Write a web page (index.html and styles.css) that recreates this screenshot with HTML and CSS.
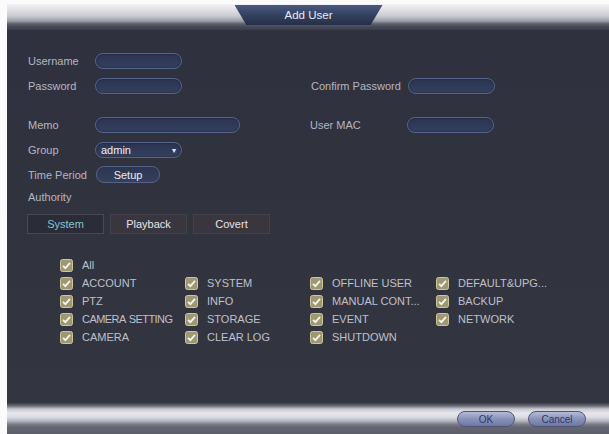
FILE: index.html
```html
<!DOCTYPE html>
<html>
<head>
<meta charset="utf-8">
<title>Add User</title>
<link rel="stylesheet" href="styles.css">
</head>
<body>
<div class="screen">
  <div class="header">
    <div class="title-tab"><span>Add User</span></div>
  </div>
  <div class="content">
    <div class="row r-user">
      <span class="lbl">Username</span>
      <span class="field"></span>
    </div>
    <div class="row r-pass">
      <span class="lbl">Password</span>
      <span class="field"></span>
      <span class="lbl right-lbl">Confirm Password</span>
      <span class="field"></span>
    </div>
    <div class="row r-memo">
      <span class="lbl">Memo</span>
      <span class="field wide"></span>
      <span class="lbl right-lbl2">User MAC</span>
      <span class="field"></span>
    </div>
    <div class="row r-group">
      <span class="lbl">Group</span>
      <span class="field select"><span>admin</span><span class="arrow">&#9662;</span></span>
    </div>
    <div class="row r-time">
      <span class="lbl">Time Period</span>
      <span class="btn-setup">Setup</span>
    </div>
    <div class="row r-auth">
      <span class="lbl">Authority</span>
    </div>
    <div class="tabs">
      <span class="tab active">System</span>
      <span class="tab">Playback</span>
      <span class="tab">Covert</span>
    </div>
    <div class="checks">
      <label class="chk"><svg class="cb" viewBox="0 0 13 13"><rect x="0.5" y="0.5" width="12" height="12" rx="2"/><path d="M3 6.8 L5.4 9.2 L10 3.8"/></svg>All</label>
      <span></span><span></span><span></span>
      <label class="chk"><svg class="cb" viewBox="0 0 13 13"><rect x="0.5" y="0.5" width="12" height="12" rx="2"/><path d="M3 6.8 L5.4 9.2 L10 3.8"/></svg>ACCOUNT</label>
      <label class="chk"><svg class="cb" viewBox="0 0 13 13"><rect x="0.5" y="0.5" width="12" height="12" rx="2"/><path d="M3 6.8 L5.4 9.2 L10 3.8"/></svg>SYSTEM</label>
      <label class="chk"><svg class="cb" viewBox="0 0 13 13"><rect x="0.5" y="0.5" width="12" height="12" rx="2"/><path d="M3 6.8 L5.4 9.2 L10 3.8"/></svg>OFFLINE USER</label>
      <label class="chk"><svg class="cb" viewBox="0 0 13 13"><rect x="0.5" y="0.5" width="12" height="12" rx="2"/><path d="M3 6.8 L5.4 9.2 L10 3.8"/></svg>DEFAULT&amp;UPG...</label>
      <label class="chk"><svg class="cb" viewBox="0 0 13 13"><rect x="0.5" y="0.5" width="12" height="12" rx="2"/><path d="M3 6.8 L5.4 9.2 L10 3.8"/></svg>PTZ</label>
      <label class="chk"><svg class="cb" viewBox="0 0 13 13"><rect x="0.5" y="0.5" width="12" height="12" rx="2"/><path d="M3 6.8 L5.4 9.2 L10 3.8"/></svg>INFO</label>
      <label class="chk"><svg class="cb" viewBox="0 0 13 13"><rect x="0.5" y="0.5" width="12" height="12" rx="2"/><path d="M3 6.8 L5.4 9.2 L10 3.8"/></svg>MANUAL CONT...</label>
      <label class="chk"><svg class="cb" viewBox="0 0 13 13"><rect x="0.5" y="0.5" width="12" height="12" rx="2"/><path d="M3 6.8 L5.4 9.2 L10 3.8"/></svg>BACKUP</label>
      <label class="chk tight"><svg class="cb" viewBox="0 0 13 13"><rect x="0.5" y="0.5" width="12" height="12" rx="2"/><path d="M3 6.8 L5.4 9.2 L10 3.8"/></svg>CAMERA SETTING</label>
      <label class="chk"><svg class="cb" viewBox="0 0 13 13"><rect x="0.5" y="0.5" width="12" height="12" rx="2"/><path d="M3 6.8 L5.4 9.2 L10 3.8"/></svg>STORAGE</label>
      <label class="chk"><svg class="cb" viewBox="0 0 13 13"><rect x="0.5" y="0.5" width="12" height="12" rx="2"/><path d="M3 6.8 L5.4 9.2 L10 3.8"/></svg>EVENT</label>
      <label class="chk"><svg class="cb" viewBox="0 0 13 13"><rect x="0.5" y="0.5" width="12" height="12" rx="2"/><path d="M3 6.8 L5.4 9.2 L10 3.8"/></svg>NETWORK</label>
      <label class="chk"><svg class="cb" viewBox="0 0 13 13"><rect x="0.5" y="0.5" width="12" height="12" rx="2"/><path d="M3 6.8 L5.4 9.2 L10 3.8"/></svg>CAMERA</label>
      <label class="chk"><svg class="cb" viewBox="0 0 13 13"><rect x="0.5" y="0.5" width="12" height="12" rx="2"/><path d="M3 6.8 L5.4 9.2 L10 3.8"/></svg>CLEAR LOG</label>
      <label class="chk"><svg class="cb" viewBox="0 0 13 13"><rect x="0.5" y="0.5" width="12" height="12" rx="2"/><path d="M3 6.8 L5.4 9.2 L10 3.8"/></svg>SHUTDOWN</label>
    </div>
  </div>
  <div class="footer">
    <span class="fbtn">OK</span>
    <span class="fbtn">Cancel</span>
  </div>
</div>
</body>
</html>
```
FILE: styles.css
```css
html, body {
  margin: 0;
  padding: 0;
  background: #fbfbfb;
  font-family: "Liberation Sans", Arial, sans-serif;
}
.screen {
  margin: 4px 0 0 7px;
  width: 602px;
  height: 430px;
  display: flex;
  flex-direction: column;
  background: #31343f;
}
.header {
  height: 26px;
  flex: none;
  display: flex;
  justify-content: center;
  background: linear-gradient(to bottom, #f2f2f4 0, #e4e4e8 5px, #c9cacf 12px, #9c9ea8 17px, #5a5d6a 20px, #454856 23px, #3a3d4a 26px);
}
.title-tab {
  width: 148px;
  height: 20px;
  margin-top: 1px;
  margin-left: 1px;
  clip-path: polygon(0 0, 100% 0, 92% 100%, 8% 100%);
  background: linear-gradient(to bottom, #4a5a80 0, #33415f 50%, #262f47 100%);
  display: flex;
  justify-content: center;
  align-items: center;
  color: #e8ebf2;
  font-size: 11.5px;
}
.content {
  flex: 1;
  padding-left: 21px;
  background: linear-gradient(to bottom, #2f323e 0, #31343f 60%, #33363f 100%);
}
.row {
  display: flex;
  align-items: center;
  height: 16px;
  font-size: 11px;
  color: #b4b6c2;
}
.r-user { margin-top: 23px; }
.r-pass { margin-top: 9px; }
.r-memo { margin-top: 23px; }
.r-group { margin-top: 9px; }
.r-time { margin-top: 8px; height: 17px; }
.r-auth { margin-top: 7px; height: 14px; }
.lbl {
  width: 67px;
  flex: none;
  white-space: nowrap;
}
.right-lbl { margin-left: 129px; width: 97px; }
.right-lbl2 { margin-left: 70px; width: 97px; }
.field {
  box-sizing: border-box;
  width: 87px;
  height: 16px;
  border: 1px solid #56648c;
  border-radius: 8px;
  background: linear-gradient(to bottom, #2b3552 0, #33405f 100%);
  box-shadow: inset 0 0 2px rgba(0,0,0,0.5);
}
.field.wide { width: 145px; }
.field.select {
  display: flex;
  align-items: center;
  justify-content: space-between;
  padding: 0 5px 0 5px;
  color: #eeeef4;
  font-size: 11px;
}
.arrow { font-size: 8px; color: #e8e8ee; }
.btn-setup {
  box-sizing: border-box;
  width: 64px;
  height: 17px;
  margin-left: 1px;
  border: 1px solid #56628a;
  border-radius: 8px;
  background: linear-gradient(to bottom, #2d3650 0, #36405c 100%);
  color: #ececf2;
  font-size: 11px;
  display: flex;
  align-items: center;
  justify-content: center;
}
.tabs {
  display: flex;
  gap: 6px;
  margin-top: 10px;
  margin-left: -1px;
  height: 20px;
}
.tab {
  box-sizing: border-box;
  width: 77px;
  height: 20px;
  display: flex;
  align-items: center;
  justify-content: center;
  font-size: 11px;
  color: #e4e4ea;
  background: #3a3640;
  border: 1px solid #45414c;
}
.tab.active {
  background: #2a2c36;
  border-color: #474a55;
  color: #86c4d4;
}
.checks {
  display: grid;
  grid-template-columns: 125px 125px 126px auto;
  grid-auto-rows: 18px;
  margin-top: 22px;
  padding-left: 32px;
}
.chk {
  display: flex;
  align-items: center;
  gap: 9px;
  font-size: 11px;
  color: #bec0cc;
  white-space: nowrap;
}
.chk.tight { letter-spacing: -0.55px; word-spacing: 1px; }
.cb {
  width: 13px;
  height: 13px;
  flex: none;
}
.cb rect {
  fill: #9d9872;
  stroke: #ccc79e;
  stroke-width: 1;
}
.cb path {
  fill: none;
  stroke: #f4f4ee;
  stroke-width: 1.8;
}
.footer {
  height: 31px;
  flex: none;
  display: flex;
  justify-content: flex-end;
  align-items: flex-start;
  gap: 13px;
  padding-right: 23px;
  box-sizing: border-box;
  background: linear-gradient(to bottom, #3a3d4a 0, #6c6e7a 3px, #c6c7d0 6px, #e6e6ec 10px, #dcdce4 14px, #b4b6c0 18px, #7e808c 21px, #646673 24px, #5c5e6a 100%);
}
.fbtn {
  margin-top: 8px;
  box-sizing: border-box;
  width: 58px;
  height: 16px;
  border: 1px solid #4e5578;
  border-radius: 9px;
  background: linear-gradient(to bottom, #b4bcd8 0, #8c96bc 45%, #6c76a0 100%);
  color: #2e3766;
  font-size: 10px;
  display: flex;
  align-items: center;
  justify-content: center;
}
```
